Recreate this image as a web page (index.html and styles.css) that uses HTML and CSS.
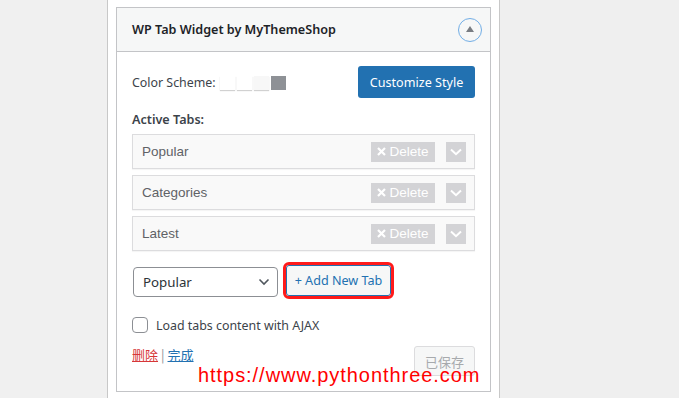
FILE: index.html
```html
<!DOCTYPE html>
<html lang="en">
<head>
<meta charset="utf-8">
<title>WP Tab Widget</title>
<link rel="stylesheet" href="styles.css">
</head>
<body>
<div class="page">
  <div class="side-left"></div>
  <div class="column">
    <div class="widget">
      <div class="widget-head">
        <h3 class="widget-title">WP Tab Widget by MyThemeShop</h3>
        <span class="toggle"><span class="tri"></span></span>
      </div>
      <div class="widget-body">
        <div class="scheme-row">
          <div class="scheme">
            <span class="scheme-label">Color Scheme:</span>
            <span class="swatches">
              <span class="sw"></span><span class="sw"></span><span class="sw sw-light"></span><span class="sw sw-dark"></span>
            </span>
          </div>
          <span class="btn-primary">Customize Style</span>
        </div>
        <div class="section-label">Active Tabs:</div>
        <ul class="tabs">
          <li class="tab">
            <span class="tab-name">Popular</span>
            <span class="tab-del"><svg width="9" height="9" viewBox="0 0 9 9"><path d="M1 1L8 8M8 1L1 8" stroke="#fff" stroke-width="2.2" fill="none"/></svg>Delete</span>
            <span class="tab-chev"><svg width="12" height="8" viewBox="0 0 12 8"><path d="M1 1.5L6 6.2L11 1.5" stroke="#fff" stroke-width="2" fill="none"/></svg></span>
          </li>
          <li class="tab">
            <span class="tab-name">Categories</span>
            <span class="tab-del"><svg width="9" height="9" viewBox="0 0 9 9"><path d="M1 1L8 8M8 1L1 8" stroke="#fff" stroke-width="2.2" fill="none"/></svg>Delete</span>
            <span class="tab-chev"><svg width="12" height="8" viewBox="0 0 12 8"><path d="M1 1.5L6 6.2L11 1.5" stroke="#fff" stroke-width="2" fill="none"/></svg></span>
          </li>
          <li class="tab">
            <span class="tab-name">Latest</span>
            <span class="tab-del"><svg width="9" height="9" viewBox="0 0 9 9"><path d="M1 1L8 8M8 1L1 8" stroke="#fff" stroke-width="2.2" fill="none"/></svg>Delete</span>
            <span class="tab-chev"><svg width="12" height="8" viewBox="0 0 12 8"><path d="M1 1.5L6 6.2L11 1.5" stroke="#fff" stroke-width="2" fill="none"/></svg></span>
          </li>
        </ul>
        <div class="add-row">
          <span class="select">Popular<svg width="12" height="8" viewBox="0 0 12 8"><path d="M1.5 1.5L6 6L10.5 1.5" stroke="#50575e" stroke-width="1.6" fill="none"/></svg></span>
          <span class="btn-add">+ Add New Tab</span>
        </div>
        <label class="check"><span class="box"></span>Load tabs content with AJAX</label>
        <div class="actions">
          <div class="links"><a class="link-del">删除</a><span class="sep">|</span><a class="link-done">完成</a></div>
          <span class="btn-saved">已保存</span>
        </div>
      </div>
    </div>
  </div>
  <div class="side-right"></div>
</div>
<div class="watermark">https://www.pythonthree.com</div>
</body>
</html>
```

FILE: styles.css
```css
* { box-sizing: border-box; }
html, body { margin: 0; padding: 0; }
body {
  width: 679px;
  height: 398px;
  overflow: hidden;
  background: #f0f0f0;
  font-family: "Noto Sans", "Open Sans", sans-serif;
  font-size: 12.4px;
  color: #3c434a;
  position: relative;
}
.page {
  display: flex;
  height: 398px;
}
.side-left {
  width: 108px;
  background: #f0f0f0;
  border-right: 1px solid #c8c8c8;
}
.column {
  width: 392px;
  background: #fff;
  border-right: 1px solid #c8c8c8;
  padding: 7px 8px 0 8px;
}
.side-right {
  flex: 1;
  background: #efefef;
}
.widget {
  width: 375px;
}
.widget-head {
  height: 45px;
  background: #f6f7f7;
  border: 1px solid #c3c4c7;
  display: flex;
  align-items: center;
  justify-content: space-between;
  padding: 0 8px 0 15px;
}
.widget-title {
  margin: 0;
  font-size: 12.6px;
  font-weight: 600;
  color: #1d2327;
}
.toggle {
  width: 24px;
  height: 24px;
  border: 1.5px solid #72aee6;
  border-radius: 50%;
  display: flex;
  align-items: center;
  justify-content: center;
}
.tri {
  width: 0;
  height: 0;
  border-left: 4.5px solid transparent;
  border-right: 4.5px solid transparent;
  border-bottom: 6px solid #787c82;
  margin-top: -1px;
}
.widget-body {
  border: 1px solid #c3c4c7;
  border-top: none;
  padding: 14px 15px 15px 15px;
  height: 340px;
}
.scheme-row {
  display: flex;
  align-items: center;
  justify-content: space-between;
  height: 32px;
}
.scheme {
  display: flex;
  align-items: center;
  gap: 4px;
}
.swatches {
  display: flex;
  gap: 2px;
  margin-top: 2px;
}
.sw {
  width: 15px;
  height: 14px;
  background: #fff;
  box-shadow: 0 1px 1px rgba(0,0,0,0.18);
}
.sw-light { background: #f7f7f7; }
.sw-dark { background: #8e9196; box-shadow: none; }
.btn-primary {
  height: 32px;
  width: 117px;
  background: #2271b1;
  border-radius: 3px;
  color: #fff;
  display: flex;
  align-items: center;
  justify-content: center;
  font-size: 12.6px;
}
.section-label {
  margin-top: 13px;
  line-height: 18px;
  font-weight: 600;
  font-size: 12.6px;
  color: #3c434a;
}
.tabs {
  list-style: none;
  margin: 5px 0 0 0;
  padding: 0;
  display: flex;
  flex-direction: column;
  gap: 6px;
}
.tab {
  height: 35px;
  border: 1px solid #dcdcde;
  background: #f9f9f9;
  box-shadow: 0 1px 1px rgba(0,0,0,0.04);
  display: flex;
  align-items: center;
  padding: 0 8px 0 9px;
  font-family: "Liberation Sans", Arial, sans-serif;
}
.tab-name {
  flex: 1;
  color: #5f6266;
  font-size: 13.5px;
}
.tab-del {
  height: 20px;
  width: 64px;
  background: #d3d3d6;
  color: #fff;
  display: flex;
  align-items: center;
  justify-content: center;
  gap: 3px;
  font-size: 13.5px;
}
.tab-chev {
  width: 20px;
  height: 20px;
  margin-left: 11px;
  background: #d3d3d6;
  display: flex;
  align-items: center;
  justify-content: center;
}
.add-row {
  display: flex;
  align-items: center;
  margin-top: 16px;
  gap: 8px;
  height: 30px;
}
.select {
  margin-left: 1px;
  width: 145px;
  height: 30px;
  border: 1px solid #8c8f94;
  border-radius: 4px;
  display: flex;
  align-items: center;
  justify-content: space-between;
  padding: 0 7px 0 9px;
  font-size: 13.3px;
  color: #2c3338;
}
.btn-add {
  width: 105px;
  height: 31px;
  margin-top: -3px;
  border: 1px solid #2271b1;
  border-radius: 3px;
  background: #f6f7f7;
  color: #2271b1;
  display: flex;
  align-items: center;
  justify-content: center;
  outline: 3px solid #ff1a1a;
  font-size: 12.6px;
}
.check {
  display: flex;
  align-items: center;
  gap: 8px;
  margin-top: 20px;
  height: 16px;
  color: #3c434a;
}
.box {
  width: 16px;
  height: 16px;
  border: 1px solid #8c8f94;
  border-radius: 4px;
  background: #fff;
}
.actions {
  display: flex;
  justify-content: space-between;
  align-items: flex-start;
  margin-top: 13px;
}
.links {
  line-height: 18px;
  font-family: "Noto Sans CJK SC", "Noto Sans", sans-serif;
  font-size: 13px;
  display: flex;
  gap: 3px;
}
.link-del { color: #d63638; text-decoration: underline; }
.link-done { color: #2271b1; text-decoration: underline; }
.sep { color: #8c8f94; }
.btn-saved {
  width: 61px;
  height: 30px;
  border: 1px solid #dcdcde;
  border-radius: 3px;
  background: #f6f7f7;
  color: #a7aaad;
  display: flex;
  align-items: center;
  justify-content: center;
  font-family: "Noto Sans CJK SC", sans-serif;
  font-size: 13px;
}
.watermark {
  position: absolute;
  left: 198px;
  top: 364px;
  line-height: 23px;
  font-family: "Liberation Sans", Arial, sans-serif;
  font-size: 20px;
  letter-spacing: 0.95px;
  color: #ff0000;
}
```
